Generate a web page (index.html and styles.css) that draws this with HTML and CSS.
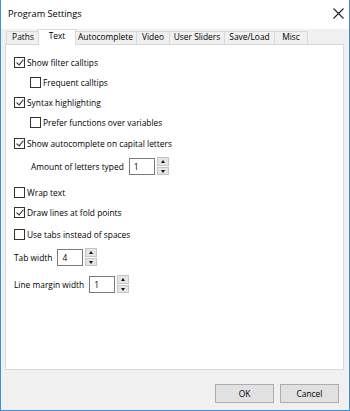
FILE: index.html
```html
<!DOCTYPE html>
<html>
<head>
<meta charset="utf-8">
<link rel="stylesheet" href="styles.css">
</head>
<body>
<div class="window">
  <div class="titlebar">
    <span class="title">Program Settings</span>
    <svg class="close" width="11" height="11" viewBox="0 0 11 11"><path d="M0.5 0.5 L10.5 10.5 M10.5 0.5 L0.5 10.5" stroke="#222" stroke-width="1.1" fill="none"/></svg>
  </div>
  <div class="body">
    <div class="tabs">
      <div class="tab t-paths">Paths</div>
      <div class="tab sel t-text">Text</div>
      <div class="tab t-auto">Autocomplete</div>
      <div class="tab t-video">Video</div>
      <div class="tab t-user">User Sliders</div>
      <div class="tab t-save">Save/Load</div>
      <div class="tab t-misc">Misc</div>
    </div>
    <div class="panel">
      <div class="row r1"><span class="cb checked"></span><span>Show filter calltips</span></div>
      <div class="row indent"><span class="cb"></span><span>Frequent calltips</span></div>
      <div class="row"><span class="cb checked"></span><span>Syntax highlighting</span></div>
      <div class="row indent"><span class="cb"></span><span>Prefer functions over variables</span></div>
      <div class="row m1"><span class="cb checked"></span><span>Show autocomplete on capital letters</span></div>
      <div class="row spinrow m3 lindent"><span class="lbl">Amount of letters typed</span><span class="input">1</span><span class="spin"><span class="up"></span><span class="dn"></span></span></div>
      <div class="row m6"><span class="cb"></span><span>Wrap text</span></div>
      <div class="row"><span class="cb checked"></span><span>Draw lines at fold points</span></div>
      <div class="row m2"><span class="cb"></span><span>Use tabs instead of spaces</span></div>
      <div class="row spinrow m3 l0"><span class="lbl">Tab width</span><span class="input">4</span><span class="spin"><span class="up"></span><span class="dn"></span></span></div>
      <div class="row spinrow m7 l0"><span class="lbl">Line margin width</span><span class="input">1</span><span class="spin"><span class="up"></span><span class="dn"></span></span></div>
    </div>
    <div class="footer">
      <div class="btn">OK</div>
      <div class="btn">Cancel</div>
    </div>
  </div>
</div>
</body>
</html>
```
FILE: styles.css
```css
* { box-sizing: border-box; }
html, body { margin: 0; padding: 0; background: #f0f0f0; }
body {
  font-family: "Segoe UI", "Open Sans", sans-serif;
  font-size: 8.4px;
  color: #000;
}
.window {
  width: 350px;
  height: 411px;
  border: 1px solid #3a91e0;
  border-top: none;
  display: flex;
  flex-direction: column;
  background: #f0f0f0;
}
.titlebar {
  height: 29px;
  background: #fff;
  display: flex;
  align-items: center;
  padding-left: 7px;
  padding-right: 5px;
}
.title {
  font-size: 9.2px;
  flex: 1;
  margin-top: -2px;
}
.close { margin-right: 0px; margin-top: -3px; }
.body {
  display: flex;
  flex-direction: column;
  flex: 1;
}
.tabs {
  display: flex;
  height: 15px;
  padding-left: 5px;
  align-items: flex-end;
  position: relative;
  z-index: 1;
}
.tab {
  height: 13px;
  border: 1px solid #d9d9d9;
  border-bottom: none;
  background: #f0f0f0;
  display: flex;
  align-items: center;
  justify-content: center;
  line-height: 1;
  margin-right: -1px;
  padding-bottom: 1px;
}
.tab.sel {
  height: 16px;
  background: #fff;
  margin-bottom: -1px;
  margin-left: -1px;
  margin-right: -2px;
  position: relative;
  z-index: 2;
  padding-bottom: 3px;
}
.t-paths { width: 34px; }
.t-text { width: 38px; }
.t-auto { width: 63px; }
.t-video { width: 34px; }
.t-user { width: 56px; }
.t-save { width: 51px; }
.t-misc { width: 34px; }
.panel {
  margin-left: 4px;
  width: 339px;
  height: 326px;
  background: #fff;
  border: 1px solid #d9d9d9;
  padding-top: 7px;
  padding-left: 8px;
  display: flex;
  flex-direction: column;
}
.row {
  height: 20px;
  display: flex;
  align-items: center;
  white-space: nowrap;
}
.row.indent { padding-left: 16px; }
.m1 { margin-top: 1px; }
.m2 { margin-top: 2px; }
.m3 { margin-top: 3px; }
.m6 { margin-top: 6px; }
.m7 { margin-top: 7px; }
.cb {
  width: 11px;
  height: 11px;
  border: 1px solid #333;
  background: #fff;
  margin-right: 2px;
  flex: none;
  position: relative;
}
.cb.checked::after {
  content: "";
  position: absolute;
  left: 3px;
  top: 0px;
  width: 3px;
  height: 6px;
  border-right: 1px solid #222;
  border-bottom: 1px solid #222;
  transform: rotate(40deg);
}
.lindent { padding-left: 17px; }
.l0 { padding-left: 0px; }
.lbl { margin-right: 5px; }
.input {
  width: 26px;
  height: 17px;
  border: 1px solid #7a7a7a;
  background: #fff;
  padding-left: 4px;
  display: flex;
  align-items: center;
}
.spin {
  width: 12px;
  height: 18px;
  margin-left: 2px;
  display: flex;
  flex-direction: column;
  gap: 1px;
}
.spin .up, .spin .dn {
  flex: 1;
  background: #e5e5e5;
  border: 1px solid #c4c4c4;
  position: relative;
}
.spin .up::after, .spin .dn::after {
  content: "";
  position: absolute;
  left: 3px;
  width: 0;
  height: 0;
  border-left: 2.5px solid transparent;
  border-right: 2.5px solid transparent;
}
.spin .up::after { top: 2px; border-bottom: 3px solid #111; }
.spin .dn::after { top: 2px; border-top: 3px solid #111; }
.footer {
  display: flex;
  justify-content: flex-end;
  gap: 6px;
  padding-right: 10px;
  margin-top: 14px;
}
.btn {
  width: 59px;
  height: 19px;
  background: #e1e1e1;
  border: 1px solid #adadad;
  display: flex;
  align-items: center;
  justify-content: center;
}
```
